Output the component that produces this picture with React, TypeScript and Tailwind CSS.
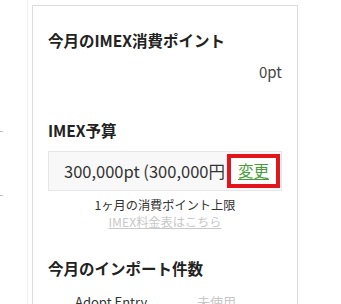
export default function App() {
  return (
    <div
      className="relative w-[341px] h-[304px] overflow-hidden bg-white text-[#333]"
      style={{ fontFamily: '"Noto Sans CJK JP", "Noto Sans", sans-serif' }}
    >
      {/* faint sidebar edge */}
      <div className="absolute left-[27px] top-0 h-full w-px bg-[#f0f0f0]" />
      <div className="absolute left-0 top-[131px] h-px w-[3px] bg-[#bbb]" />
      <div className="absolute left-0 top-[195px] h-px w-[3px] bg-[#bbb]" />

      <div className="ml-[32px] mt-[5px] w-[266px] border border-[#dcdcdc] bg-white pl-[15px] pr-[15px] pt-[24px] h-[320px]">
        <h2 className="text-[15.5px] font-bold leading-[21px] text-[#222]">今月のIMEX消費ポイント</h2>
        <div className="mt-[11px] text-right text-[15px] leading-[20px] text-[#444]">0pt</div>

        <h2 className="mt-[38px] text-[15.5px] font-bold leading-[21px] text-[#222]">IMEX予算</h2>
        <div className="mt-[10px] flex h-[40px] items-center border border-[#e6e6e6] bg-[#f8f8f8] pl-[15px]">
          <span className="text-[16.5px] leading-none text-[#333] whitespace-nowrap">300,000pt (300,000円</span>
          <div className="ml-auto mr-[1px] flex h-[34px] w-[53px] items-center justify-center border-[4px] border-[#e3141c] bg-white">
            <a className="text-[15.5px] leading-none text-[#4a9a3c] underline underline-offset-2">変更</a>
          </div>
        </div>
        <p className="mt-[6px] text-center text-[12.2px] leading-[17px] text-[#333]">1ヶ月の消費ポイント上限</p>
        <p className="text-center text-[12.2px] leading-[17px] text-[#c8c8c8] underline">IMEX料金表はこちら</p>

        <h2 className="mt-[27px] text-[15.5px] font-bold leading-[21px] text-[#222]">今月のインポート件数</h2>
        <div className="mt-[14px] flex text-[13px] leading-[18px]">
          <span className="ml-[27px] text-[#333]">Adopt Entry</span>
          <span className="ml-auto mr-[46px] text-[#c8c8c8]">未使用</span>
        </div>
      </div>
    </div>
  );
}
